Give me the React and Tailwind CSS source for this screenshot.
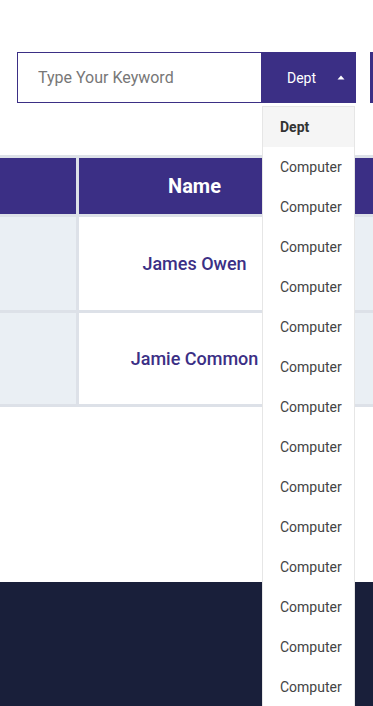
import { useState } from 'react'

const options = ['Dept', ...Array(14).fill('Computer')]

export default function App() {
  const [open] = useState(true)

  return (
    <div className="w-[373px] overflow-hidden bg-white" style={{ fontFamily: 'Roboto, "Liberation Sans", sans-serif' }}>
      {/* search bar */}
      <div className="pt-[52px] pl-[17px] flex">
        <input
          placeholder="Type Your Keyword"
          className="w-[244px] h-[51px] shrink-0 border border-[#3b2f85] border-r-0 pl-5 text-base text-[#333] placeholder-[#777] outline-none"
        />
        <div className="relative shrink-0">
          <button className="w-[95px] h-[51px] bg-[#3b2f85] text-white text-sm flex items-center justify-end pr-[11px] gap-[21px]">
            <span>Dept</span>
            <svg width="8" height="5" viewBox="0 0 8 5"><path d="M4 0.5L7.5 4.5H0.5Z" fill="#fff" /></svg>
          </button>
          {open && (
            <ul className="absolute z-10 top-[54px] left-[1px] w-[93px] bg-white border border-[#e6e6e6]">
              {options.map((o, i) => (
                <li
                  key={i}
                  className={`h-10 flex items-center pl-[17px] text-sm ${i === 0 ? 'bg-[#f5f5f5] font-bold text-[#333]' : 'text-[#444]'}`}
                >
                  {o}
                </li>
              ))}
            </ul>
          )}
        </div>
        <div className="ml-[14px] w-[60px] h-[51px] shrink-0 bg-[#3b2f85]" />
      </div>

      {/* table */}
      <div className="mt-[52px] grid grid-cols-[76px_231px_1fr] gap-[3px] py-[3px] bg-[#dde1e8]">
        <div className="h-14 bg-[#3b2f85]" />
        <div className="h-14 bg-[#3b2f85] flex items-center justify-center text-white text-xl font-bold">Name</div>
        <div className="h-14 bg-[#3b2f85]" />

        <div className="h-[93px] bg-[#eaeff4]" />
        <div className="h-[93px] bg-white flex items-center justify-center text-[#3b2f85] text-lg font-medium">James Owen</div>
        <div className="h-[93px] bg-[#eaeff4]" />

        <div className="h-[91px] bg-[#eaeff4]" />
        <div className="h-[91px] bg-white flex items-center justify-center text-[#3b2f85] text-lg font-medium">Jamie Common</div>
        <div className="h-[91px] bg-[#eaeff4]" />
      </div>

      {/* footer */}
      <footer className="mt-[175px] bg-[#191f3a] pt-[123px] pb-10 text-center">
        <h3 className="text-white text-xl font-bold leading-none">Useful Links</h3>
      </footer>
    </div>
  )
}
